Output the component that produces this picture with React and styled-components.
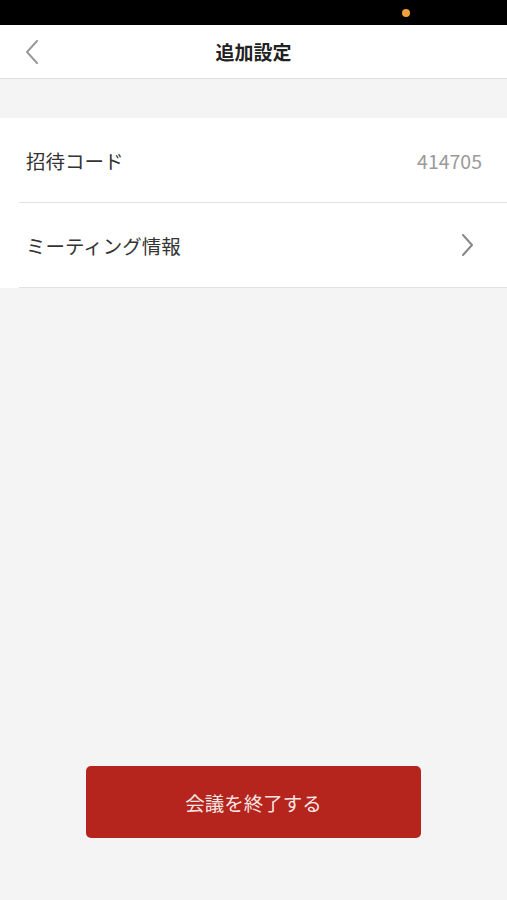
import React from 'react'
import styled, { createGlobalStyle } from 'styled-components'

const GlobalStyle = createGlobalStyle`
  html, body {
    margin: 0;
    padding: 0;
    background: #f4f4f4;
    font-family: "Noto Sans CJK JP", "Noto Sans", sans-serif;
  }
`

const Page = styled.div`
  height: 900px;
  display: flex;
  flex-direction: column;
  background: #f4f4f4;
`

const StatusBar = styled.div`
  height: 25px;
  background: #000;
  display: flex;
  align-items: center;
  justify-content: flex-end;
  padding-right: 97px;
`

const Dot = styled.span`
  width: 8px;
  height: 8px;
  border-radius: 50%;
  background: #f2a03a;
`

const Header = styled.div`
  height: 53px;
  background: #fff;
  border-bottom: 1px solid #dedede;
  display: grid;
  grid-template-columns: 60px 1fr 60px;
  align-items: center;
`

const BackButton = styled.div`
  display: flex;
  align-items: center;
  padding-left: 25px;
`

const Title = styled.h1`
  margin: 0;
  text-align: center;
  font-size: 19px;
  font-weight: 700;
  color: #222;
`

const List = styled.div`
  margin-top: 39px;
  background: #fff;
`

const Row = styled.div`
  height: 84px;
  margin-left: 19px;
  padding: 0 ${p => (p.$link ? 32 : 25)}px 0 7px;
  display: flex;
  align-items: center;
  justify-content: space-between;
  border-bottom: 1px solid #e2e2e2;
`

const Label = styled.span`
  font-size: 19.5px;
  color: #333;
`

const Value = styled.span`
  font-size: 19.5px;
  color: #9a9a9a;
`

const Footer = styled.div`
  margin-top: auto;
  padding: 0 86px 62px;
`

const EndButton = styled.button`
  width: 100%;
  height: 72px;
  border: none;
  border-radius: 5px;
  background: #b5251e;
  color: #f8e6e4;
  font-family: inherit;
  font-size: 19.5px;
`

const Chevron = ({ dir }) => (
  <svg width="14" height="24" viewBox="0 0 14 24" fill="none">
    <path
      d={dir === 'left' ? 'M12 1 L2 12 L12 23' : 'M2 2 L11 12 L2 22'}
      stroke={dir === 'left' ? '#9a9a9a' : '#888'}
      strokeWidth="2"
      strokeLinecap="round"
      strokeLinejoin="round"
    />
  </svg>
)

const App = () => (
  <Page>
    <GlobalStyle />
    <StatusBar>
      <Dot />
    </StatusBar>
    <Header>
      <BackButton>
        <Chevron dir="left" />
      </BackButton>
      <Title>追加設定</Title>
      <div />
    </Header>
    <List>
      <Row>
        <Label>招待コード</Label>
        <Value>414705</Value>
      </Row>
      <Row $link>
        <Label>ミーティング情報</Label>
        <Chevron dir="right" />
      </Row>
    </List>
    <Footer>
      <EndButton>会議を終了する</EndButton>
    </Footer>
  </Page>
)

export default App
